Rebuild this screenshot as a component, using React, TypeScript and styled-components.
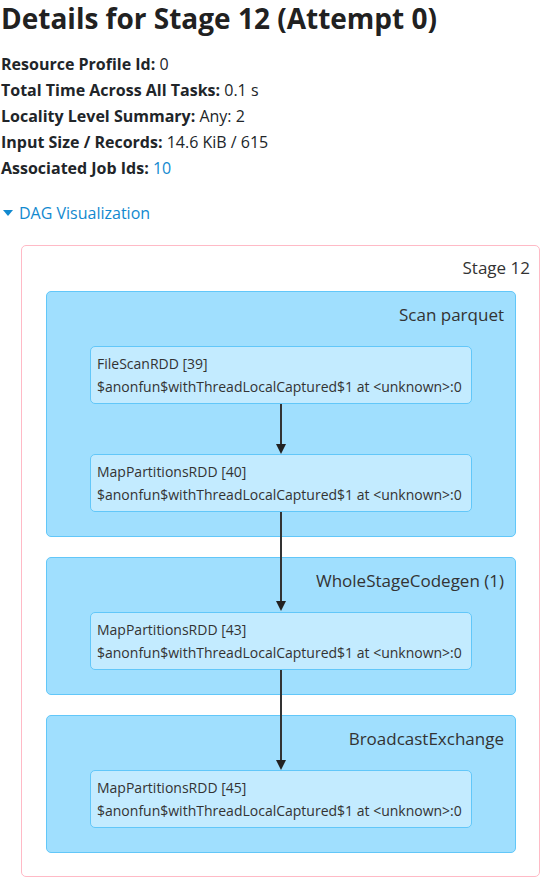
import React from "react";
import styled, { createGlobalStyle } from "styled-components";

const GlobalStyle = createGlobalStyle`
  html, body {
    margin: 0;
    padding: 0;
    background: #ffffff;
  }
  body {
    font-family: "Open Sans", "Noto Sans", sans-serif;
    color: #212529;
  }
`;

interface SummaryItem {
  label: string;
  value: string;
  link?: boolean;
}

const summary: SummaryItem[] = [
  { label: "Resource Profile Id:", value: "0" },
  { label: "Total Time Across All Tasks:", value: "0.1 s" },
  { label: "Locality Level Summary:", value: "Any: 2" },
  { label: "Input Size / Records:", value: "14.6 KiB / 615" },
  { label: "Associated Job Ids:", value: "10", link: true },
];

interface RddNode {
  name: string;
  callSite: string;
  edge?: number;
}

interface ClusterData {
  label: string;
  nodes: RddNode[];
}

const callSite = "$anonfun$withThreadLocalCaptured$1 at <unknown>:0";

const clusters: ClusterData[] = [
  {
    label: "Scan parquet",
    nodes: [
      { name: "FileScanRDD [39]", callSite, edge: 50 },
      { name: "MapPartitionsRDD [40]", callSite, edge: 99 },
    ],
  },
  {
    label: "WholeStageCodegen (1)",
    nodes: [{ name: "MapPartitionsRDD [43]", callSite, edge: 100 }],
  },
  {
    label: "BroadcastExchange",
    nodes: [{ name: "MapPartitionsRDD [45]", callSite }],
  },
];

const App: React.FC = () => {
  return (
    <>
      <GlobalStyle />
      <Page>
        <Title>Details for Stage 12 (Attempt 0)</Title>
        <Summary>
          {summary.map((item) => (
            <SummaryRow key={item.label}>
              <strong>{item.label}</strong>{" "}
              {item.link ? <Link href="#">{item.value}</Link> : item.value}
            </SummaryRow>
          ))}
        </Summary>

        <Toggle href="#">
          <Caret />
          DAG Visualization
        </Toggle>

        <StageBox>
          <StageLabel>Stage 12</StageLabel>
          <Clusters>
            {clusters.map((cluster) => (
              <Cluster key={cluster.label}>
                <ClusterLabel>{cluster.label}</ClusterLabel>
                <NodeList>
                  {cluster.nodes.map((node) => (
                    <Node key={node.name}>
                      <div>{node.name}</div>
                      <div>{node.callSite}</div>
                      {node.edge && (
                        <Edge style={{ height: node.edge }}>
                          <svg width="12" height="100%" preserveAspectRatio="none">
                            <line x1="6" y1="0" x2="6" y2="100%" stroke="#333" strokeWidth="2" />
                          </svg>
                          <ArrowHead />
                        </Edge>
                      )}
                    </Node>
                  ))}
                </NodeList>
              </Cluster>
            ))}
          </Clusters>
        </StageBox>
      </Page>
    </>
  );
};

const Page = styled.div`
  padding: 0 0 0 1px;
`;

const Title = styled.h3`
  margin: 0;
  font-size: 28px;
  font-weight: 700;
  line-height: 36px;
  color: #212121;
`;

const Summary = styled.ul`
  list-style: none;
  margin: 15px 0 0;
  padding: 0;
`;

const SummaryRow = styled.li`
  font-size: 16px;
  line-height: 26px;

  strong {
    font-weight: 700;
  }
`;

const Link = styled.a`
  color: #1289cf;
  text-decoration: none;
`;

const Toggle = styled.a`
  display: flex;
  align-items: center;
  gap: 6px;
  margin-top: 20px;
  padding-left: 2px;
  font-size: 16px;
  line-height: 24px;
  color: #1289cf;
  text-decoration: none;
`;

const Caret = styled.span`
  width: 0;
  height: 0;
  border-left: 5px solid transparent;
  border-right: 5px solid transparent;
  border-top: 6px solid #1289cf;
`;

const StageBox = styled.div`
  width: 517px;
  margin: 20px 0 0 20px;
  padding: 10px 0 23px;
  border: 1px solid #ffbac6;
  border-radius: 5px;
  color: #333333;
`;

const StageLabel = styled.div`
  text-align: right;
  padding-right: 9px;
  font-size: 17px;
  line-height: 24px;
`;

const Clusters = styled.div`
  display: flex;
  flex-direction: column;
  gap: 20px;
  margin: 11px 23px 0 24px;
`;

const Cluster = styled.div`
  padding: 11px 0 24px;
  background: #a0dffe;
  border: 1px solid #62c7f9;
  border-radius: 5px;
`;

const ClusterLabel = styled.div`
  text-align: right;
  padding-right: 11px;
  font-size: 17px;
  line-height: 24px;
`;

const NodeList = styled.div`
  display: flex;
  flex-direction: column;
  gap: 50px;
  margin: 19px 43px 0 43px;
`;

const Node = styled.div`
  position: relative;
  padding: 5px 6px;
  background: #c3ebff;
  border: 1px solid #62c7f9;
  border-radius: 5px;
  font-size: 14px;
  line-height: 23px;
  white-space: nowrap;
`;

const Edge = styled.div`
  position: absolute;
  z-index: 1;
  top: calc(100% + 1px);
  left: 50%;
  width: 12px;
  transform: translateX(-50%);
  display: flex;
  flex-direction: column;
  align-items: center;

  svg {
    flex: 1;
  }
`;

const ArrowHead = styled.span`
  width: 0;
  height: 0;
  border-left: 5px solid transparent;
  border-right: 5px solid transparent;
  border-top: 10px solid #222;
`;

export default App;
